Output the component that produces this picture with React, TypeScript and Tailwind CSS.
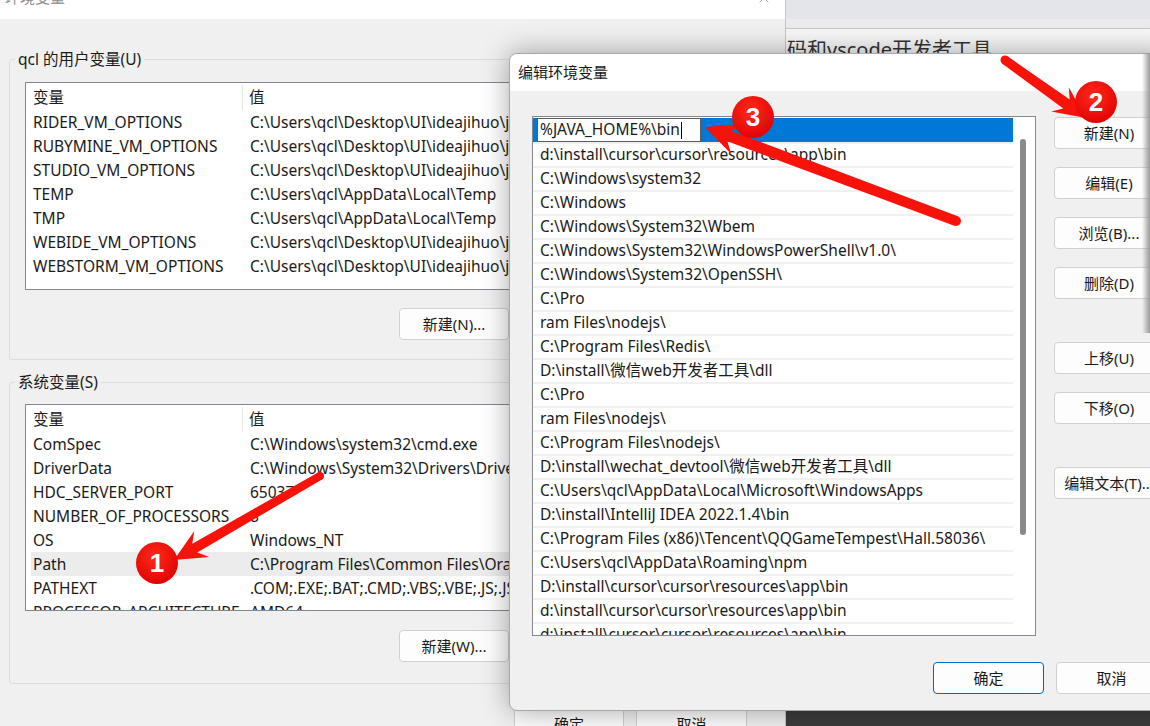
import { X } from "lucide-react";

const userVars = [
  ["RIDER_VM_OPTIONS", "C:\\Users\\qcl\\Desktop\\UI\\ideajihuo\\jetbra\\vmoptions\\rider.vmoptions"],
  ["RUBYMINE_VM_OPTIONS", "C:\\Users\\qcl\\Desktop\\UI\\ideajihuo\\jetbra\\vmoptions\\rubymine.vmoptions"],
  ["STUDIO_VM_OPTIONS", "C:\\Users\\qcl\\Desktop\\UI\\ideajihuo\\jetbra\\vmoptions\\studio.vmoptions"],
  ["TEMP", "C:\\Users\\qcl\\AppData\\Local\\Temp"],
  ["TMP", "C:\\Users\\qcl\\AppData\\Local\\Temp"],
  ["WEBIDE_VM_OPTIONS", "C:\\Users\\qcl\\Desktop\\UI\\ideajihuo\\jetbra\\vmoptions\\webide.vmoptions"],
  ["WEBSTORM_VM_OPTIONS", "C:\\Users\\qcl\\Desktop\\UI\\ideajihuo\\jetbra\\vmoptions\\webstorm.vmoptions"],
];

const sysVars = [
  ["ComSpec", "C:\\Windows\\system32\\cmd.exe"],
  ["DriverData", "C:\\Windows\\System32\\Drivers\\DriverData"],
  ["HDC_SERVER_PORT", "65037"],
  ["NUMBER_OF_PROCESSORS", "8"],
  ["OS", "Windows_NT"],
  ["Path", "C:\\Program Files\\Common Files\\Oracle\\Java\\javapath;"],
  ["PATHEXT", ".COM;.EXE;.BAT;.CMD;.VBS;.VBE;.JS;.JSE;.WSF;.WSH;.MSC"],
  ["PROCESSOR_ARCHITECTURE", "AMD64"],
];

const pathRows = [
  "d:\\install\\cursor\\cursor\\resources\\app\\bin",
  "C:\\Windows\\system32",
  "C:\\Windows",
  "C:\\Windows\\System32\\Wbem",
  "C:\\Windows\\System32\\WindowsPowerShell\\v1.0\\",
  "C:\\Windows\\System32\\OpenSSH\\",
  "C:\\Pro",
  "ram Files\\nodejs\\",
  "C:\\Program Files\\Redis\\",
  "D:\\install\\微信web开发者工具\\dll",
  "C:\\Pro",
  "ram Files\\nodejs\\",
  "C:\\Program Files\\nodejs\\",
  "D:\\install\\wechat_devtool\\微信web开发者工具\\dll",
  "C:\\Users\\qcl\\AppData\\Local\\Microsoft\\WindowsApps",
  "D:\\install\\IntelliJ IDEA 2022.1.4\\bin",
  "C:\\Program Files (x86)\\Tencent\\QQGameTempest\\Hall.58036\\",
  "C:\\Users\\qcl\\AppData\\Roaming\\npm",
  "D:\\install\\cursor\\cursor\\resources\\app\\bin",
  "d:\\install\\cursor\\cursor\\resources\\app\\bin",
  "d:\\install\\cursor\\cursor\\resources\\app\\bin",
];

function WinButton({ label, className = "", primary = false }: { label: string; className?: string; primary?: boolean }) {
  return (
    <div
      className={`h-[32px] shrink-0 flex items-center justify-center rounded-[4px] border bg-[#fdfdfd] text-[15px] text-[#1a1a1a] whitespace-nowrap ${
        primary ? "border-[#0067c0]" : "border-[#d0d0d0]"
      } ${className}`}
    >
      {label}
    </div>
  );
}

function VarList({ rows, height, selected }: { rows: string[][]; height: string; selected?: number }) {
  return (
    <div className={`w-[745px] ${height} bg-white border border-[#828790] overflow-hidden`}>
      <div className="h-[27px] flex items-center pt-[2px]">
        <div className="w-[217px] h-full flex items-center pl-[7px] border-r border-[#e5e5e5]">变量</div>
        <div className="pl-[6px]">值</div>
      </div>
      {rows.map(([name, value], i) => (
        <div
          key={name}
          className={`ml-[5px] h-[24px] flex items-center pt-[2px] whitespace-nowrap ${i === selected ? "bg-[#ececec]" : ""}`}
        >
          <span className="w-[219px] shrink-0 pl-[2px]">{name}</span>
          <span>{value}</span>
        </div>
      ))}
    </div>
  );
}

function arrowPoints(
  x1: number, y1: number, x2: number, y2: number,
  tailW: number, shaftW: number, headLen: number, headW: number, notch: number
) {
  const L = Math.hypot(x2 - x1, y2 - y1);
  const ux = (x2 - x1) / L;
  const uy = (y2 - y1) / L;
  const nx = -uy;
  const ny = ux;
  const bx = x2 - ux * headLen;
  const by = y2 - uy * headLen;
  const sx = x2 - ux * (headLen - notch);
  const sy = y2 - uy * (headLen - notch);
  const pts = [
    [x1 + (nx * tailW) / 2, y1 + (ny * tailW) / 2],
    [sx + (nx * shaftW) / 2, sy + (ny * shaftW) / 2],
    [bx + (nx * headW) / 2, by + (ny * headW) / 2],
    [x2, y2],
    [bx - (nx * headW) / 2, by - (ny * headW) / 2],
    [sx - (nx * shaftW) / 2, sy - (ny * shaftW) / 2],
    [x1 - (nx * tailW) / 2, y1 - (ny * tailW) / 2],
  ];
  return pts.map((p) => `${p[0].toFixed(1)},${p[1].toFixed(1)}`).join(" ");
}

const arrows = [
  { t: [320, 476], h: [174, 560], tw: 8, sw: 10, hl: 32, hw: 30, n: 8 },
  { t: [1005, 60], h: [1086, 118], tw: 9, sw: 11, hl: 32, hw: 30, n: 8 },
  { t: [956, 221], h: [705, 127], tw: 10, sw: 11, hl: 34, hw: 32, n: 8 },
];

const badges = [
  { x: 157, y: 563, label: "1" },
  { x: 1096, y: 102, label: "2" },
  { x: 753, y: 117, label: "3" },
];

export default function App() {
  return (
    <div className="relative w-[1150px] h-[726px] overflow-hidden bg-[#3a3a3a] font-['Noto_Sans','Noto_Sans_CJK_SC',sans-serif] text-[15.5px] text-[#1a1a1a]">
      {/* browser window behind */}
      <div className="absolute left-[700px] top-0 w-[450px] h-[726px] flex flex-col">
        <div className="h-[19px] bg-[#e3e5ea]" />
        <div className="h-[10px] bg-[#ebebeb] border-b border-[#c8c8c8]" />
        <div className="h-[640px] bg-[#f7f7f7] pl-[67px] pt-[6px] text-[20px] text-[#333] whitespace-nowrap">退码和vscode开发者工具</div>
        <div className="flex-1 bg-[#3c3c3c]" />
      </div>

      {/* environment variables dialog */}
      <div className="absolute left-0 top-0 w-[786px] h-[760px] bg-[#f0f0f0] border-r border-[#c4c4c4] flex flex-col">
        <div className="relative h-[19px] shrink-0 bg-white overflow-hidden">
          <span className="absolute left-[5px] top-[-14px] text-[15px] text-[#8c8c8c]">环境变量</span>
          <X className="absolute left-[756px] top-[-10px] w-[16px] h-[16px] text-[#8c8c8c]" strokeWidth={1.2} />
        </div>

        <div className="px-[9px]">
          <div className="relative mt-[40px] h-[301px] border border-[#dcdcdc] rounded-[3px] pt-[22px] pl-[15px]">
            <span className="absolute left-[5px] top-[-12px] px-[3px] bg-[#f0f0f0]">qcl 的用户变量(U)</span>
            <VarList rows={userVars} height="h-[208px]" />
            <div className="flex gap-[11px] mt-[18px] ml-[374px]">
              <WinButton label="新建(N)..." className="w-[110px]" />
              <WinButton label="编辑(E)..." className="w-[110px]" />
              <WinButton label="删除(D)" className="w-[110px]" />
            </div>
          </div>

          <div className="relative mt-[22px] h-[302px] border border-[#dcdcdc] rounded-[3px] pt-[21px] pl-[15px]">
            <span className="absolute left-[5px] top-[-12px] px-[3px] bg-[#f0f0f0]">系统变量(S)</span>
            <VarList rows={sysVars} height="h-[207px]" selected={5} />
            <div className="flex gap-[11px] mt-[19px] ml-[374px]">
              <WinButton label="新建(W)..." className="w-[110px]" />
              <WinButton label="编辑(I)..." className="w-[110px]" />
              <WinButton label="删除(L)" className="w-[110px]" />
            </div>
          </div>

          <div className="flex gap-[12px] mt-[24px] ml-[505px]">
            <WinButton label="确定" className="w-[110px]" />
            <WinButton label="取消" className="w-[111px]" />
          </div>
        </div>
      </div>

      {/* edit environment variable dialog */}
      <div className="absolute left-[509px] top-[53px] w-[670px] h-[658px] bg-[#f0f0f0] rounded-[8px] border border-[#a8a8a8] overflow-hidden shadow-[0_0_28px_rgba(0,0,0,0.35)] flex flex-col">
        <div className="h-[37px] shrink-0 bg-white flex items-center pl-[8px] text-[15px]">编辑环境变量</div>
        <div className="flex pl-[22px] pt-[25px]">
          <div className="relative w-[504px] h-[520px] bg-white border border-[#828790] overflow-hidden pt-[1px]">
            <div className="w-[480px]">
              <div className="h-[24px] bg-[#0078d7] flex items-center pl-[4px]">
                <div className="w-[164px] h-[24px] bg-white border border-[#5a5a5a] flex items-center pl-[2px] whitespace-nowrap">
                  %JAVA_HOME%\bin<span className="ml-[1px] w-[1px] h-[17px] bg-black" />
                </div>
              </div>
              {pathRows.map((p, i) => (
                <div key={i} className="h-[24px] flex items-center pl-[7px] border-t-[2px] border-[#f0f0f0] whitespace-nowrap">
                  {p}
                </div>
              ))}
            </div>
            <div className="absolute left-[487px] top-[22px] w-[6px] h-[396px] rounded-full bg-[#8a8a8a]" />
          </div>

          <div className="flex flex-col ml-[18px] pt-[1px] w-[110px]">
            <WinButton label="新建(N)" />
            <WinButton label="编辑(E)" className="mt-[18px]" />
            <WinButton label="浏览(B)..." className="mt-[18px]" />
            <WinButton label="删除(D)" className="mt-[18px]" />
            <WinButton label="上移(U)" className="mt-[43px]" />
            <WinButton label="下移(O)" className="mt-[18px]" />
            <WinButton label="编辑文本(T)..." className="mt-[43px]" />
          </div>
        </div>
        <div className="flex gap-[12px] mt-[26px] ml-[423px]">
          <WinButton label="确定" primary className="w-[111px]" />
          <WinButton label="取消" className="w-[111px]" />
        </div>
      </div>

      {/* shadow of window behind on right edge */}
      <div className="absolute left-[1142px] top-[53px] w-[8px] h-[280px] bg-gradient-to-r from-transparent to-[#9a9a9a]" />

      {/* annotations */}
      <svg className="absolute inset-0 pointer-events-none" width="1150" height="726">
        <defs>
          <radialGradient id="badge" cx="45%" cy="35%" r="70%">
            <stop offset="0%" stopColor="#ff2a1a" />
            <stop offset="100%" stopColor="#e00000" />
          </radialGradient>
        </defs>
        {arrows.map((a, i) => (
          <g key={i} fill="#f7120a">
            <polygon points={arrowPoints(a.t[0], a.t[1], a.h[0], a.h[1], a.tw, a.sw, a.hl, a.hw, a.n)} />
            <circle cx={a.t[0]} cy={a.t[1]} r={a.tw / 2} />
          </g>
        ))}
        {badges.map((b) => (
          <g key={b.label}>
            <circle cx={b.x} cy={b.y} r={21} fill="url(#badge)" />
            <text
              x={b.x}
              y={b.y + 9}
              textAnchor="middle"
              fill="#fff"
              fontSize="26"
              fontWeight="bold"
              fontFamily="Liberation Sans, Arial, sans-serif"
            >
              {b.label}
            </text>
          </g>
        ))}
      </svg>
    </div>
  );
}
